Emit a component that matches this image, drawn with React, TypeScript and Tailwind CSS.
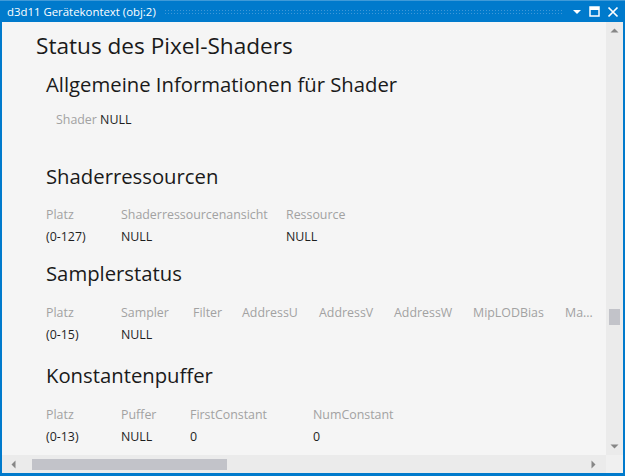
import React from "react";

const font = { fontFamily: '"Open Sans", "Noto Sans", sans-serif' };

function Heading({ children }: { children: React.ReactNode }) {
    return (
        <div className="h-[28px] leading-[28px] text-[20.3px] text-[#1a1a1a] whitespace-nowrap">
            {children}
        </div>
    );
}

type Col = { label: string; w: string };

function Table({ cols, values }: { cols: Col[]; values: string[] }) {
    return (
        <div className="flex flex-col text-[12.4px] whitespace-nowrap">
            <div className="flex h-[22px] items-center text-[#a2a2a2]">
                {cols.map((c) => (
                    <div key={c.label} className={`${c.w} shrink-0`}>
                        {c.label}
                    </div>
                ))}
            </div>
            <div className="flex h-[22px] items-center text-[#1e1e1e]">
                {cols.map((c, i) => (
                    <div key={c.label} className={`${c.w} shrink-0`}>
                        {values[i] ?? ""}
                    </div>
                ))}
            </div>
        </div>
    );
}

export default function App() {
    return (
        <div className="w-[625px] h-[476px] flex flex-col bg-[#007acc] overflow-hidden" style={font}>
            {/* title bar */}
            <div className="h-[22px] shrink-0 flex items-center border-t border-[#3f9ad8] pl-[7px] pr-[6px] text-white">
                <span className="text-[11.4px] whitespace-nowrap">d3d11 Gerätekontext (obj:2)</span>
                <div className="flex-1 mx-[8px] h-[6px] bg-[radial-gradient(circle,#3f98d8_1px,transparent_1px)] bg-[length:3px_3px]" />
                <div className="flex items-center gap-[7px]">
                    <svg width="10" height="10" viewBox="0 0 10 10">
                        <path d="M1 3h8L5 7z" fill="white" />
                    </svg>
                    <svg width="11" height="11" viewBox="0 0 11 11">
                        <rect x="1" y="1" width="9" height="9" fill="none" stroke="white" strokeWidth="1.5" />
                        <rect x="1" y="1" width="9" height="3" fill="white" />
                    </svg>
                    <svg width="12" height="12" viewBox="0 0 12 12">
                        <path d="M1.5 1.5l9 9M10.5 1.5l-9 9" stroke="white" strokeWidth="1.7" />
                    </svg>
                </div>
            </div>

            {/* body */}
            <div className="flex-1 flex flex-col mx-[2px] mb-[3px] bg-[#f5f5f5] min-h-0">
                <div className="flex-1 flex min-h-0">
                    <div className="flex-1 overflow-hidden pt-[10px] pl-[34px]">
                        <div className="h-[28px] leading-[28px] text-[22.6px] text-[#1a1a1a] whitespace-nowrap">
                            Status des Pixel-Shaders
                        </div>
                        <div className="pl-[10px]">
                            <div className="mt-[10px]">
                                <Heading>Allgemeine Informationen für Shader</Heading>
                            </div>
                            <div className="mt-[14px] h-[16px] leading-[16px] pl-[10px] text-[12.4px]">
                                <span className="text-[#a2a2a2]">Shader</span>{" "}
                                <span className="text-[#1e1e1e]">NULL</span>
                            </div>
                            <div className="mt-[34px]">
                                <Heading>Shaderressourcen</Heading>
                            </div>
                            <div className="mt-[14px]">
                                <Table
                                    cols={[
                                        { label: "Platz", w: "w-[75px]" },
                                        { label: "Shaderressourcenansicht", w: "w-[165px]" },
                                        { label: "Ressource", w: "w-[80px]" },
                                    ]}
                                    values={["(0-127)", "NULL", "NULL"]}
                                />
                            </div>
                            <div className="mt-[11px]">
                                <Heading>Samplerstatus</Heading>
                            </div>
                            <div className="mt-[15px]">
                                <Table
                                    cols={[
                                        { label: "Platz", w: "w-[75px]" },
                                        { label: "Sampler", w: "w-[72px]" },
                                        { label: "Filter", w: "w-[49px]" },
                                        { label: "AddressU", w: "w-[77px]" },
                                        { label: "AddressV", w: "w-[75px]" },
                                        { label: "AddressW", w: "w-[79px]" },
                                        { label: "MipLODBias", w: "w-[92px]" },
                                        { label: "Ma...", w: "w-[60px]" },
                                    ]}
                                    values={["(0-15)", "NULL"]}
                                />
                            </div>
                            <div className="mt-[15px]">
                                <Heading>Konstantenpuffer</Heading>
                            </div>
                            <div className="mt-[15px]">
                                <Table
                                    cols={[
                                        { label: "Platz", w: "w-[75px]" },
                                        { label: "Puffer", w: "w-[69px]" },
                                        { label: "FirstConstant", w: "w-[123px]" },
                                        { label: "NumConstant", w: "w-[100px]" },
                                    ]}
                                    values={["(0-13)", "NULL", "0", "0"]}
                                />
                            </div>
                        </div>
                    </div>
                    {/* vertical scrollbar */}
                    <div className="w-[17px] shrink-0 bg-[#ebebeb] flex flex-col items-center py-[5px]">
                        <svg width="9" height="6" viewBox="0 0 9 6">
                            <path d="M0.5 5.5L4.5 1.5L8.5 5.5z" fill="#868686" />
                        </svg>
                        <div className="flex-1 w-full flex flex-col items-center">
                            <div className="mt-[276px] w-[11px] h-[16px] bg-[#c2c3c9]" />
                        </div>
                        <svg width="9" height="6" viewBox="0 0 9 6">
                            <path d="M0.5 0.5L8.5 0.5L4.5 4.5z" fill="#868686" />
                        </svg>
                    </div>
                </div>
                {/* horizontal scrollbar */}
                <div className="h-[18px] shrink-0 flex">
                    <div className="flex-1 bg-[#ebebeb] flex items-center pl-[8px] pr-[9px]">
                        <svg width="6" height="9" viewBox="0 0 6 9">
                            <path d="M5.5 0.5L5.5 8.5L1.5 4.5z" fill="#868686" />
                        </svg>
                        <div className="flex-1 flex items-center pl-[16px]">
                            <div className="w-[195px] h-[11px] bg-[#c2c3c9]" />
                        </div>
                        <svg width="6" height="9" viewBox="0 0 6 9">
                            <path d="M0.5 0.5L0.5 8.5L4.5 4.5z" fill="#868686" />
                        </svg>
                    </div>
                    <div className="w-[17px] bg-[#f0f0f0]" />
                </div>
            </div>
        </div>
    );
}
